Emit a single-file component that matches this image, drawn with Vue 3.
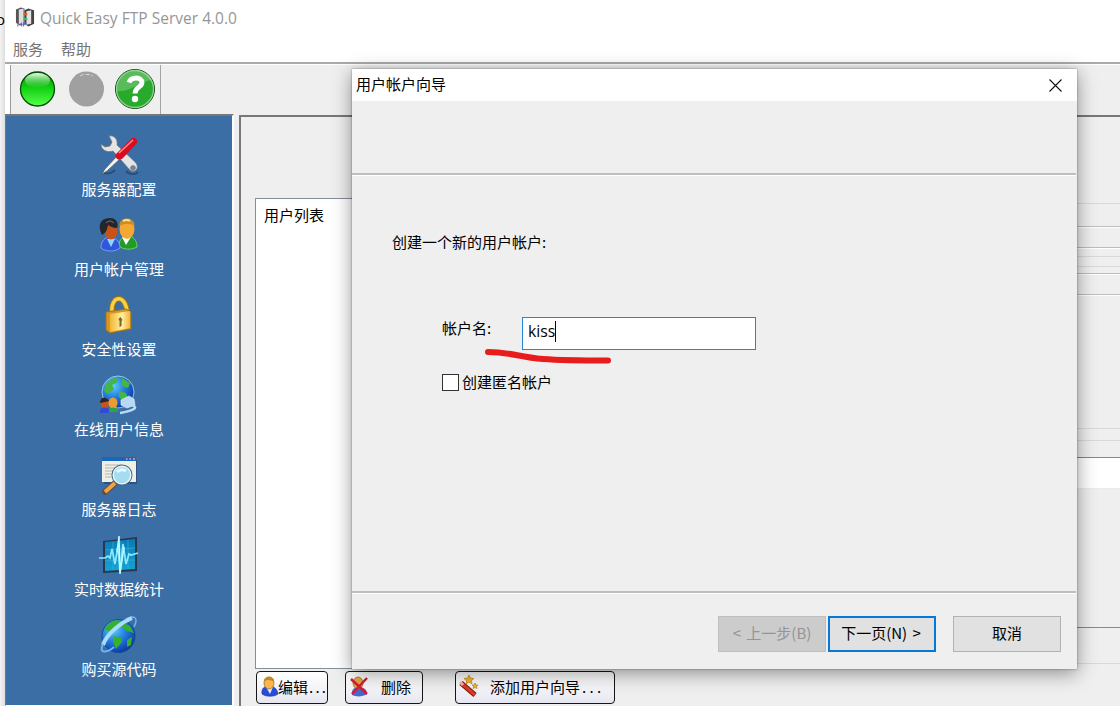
<template>
  <div class="desktop">
    <div class="behind">o</div>

    <!-- 主窗口 -->
    <div class="app-window">
      <header class="title-bar">
        <svg class="app-icon" viewBox="0 0 21 21">
          <path d="M1 2l5-2 4 1v17l-5 1-4-3z" fill="#555" />
          <path d="M4 2l5-1v17l-5-1z" fill="#ddd" />
          <path d="M10 3l4-2 6 2v14l-6 3-4-3z" fill="#444" />
          <path d="M12 4l5-1v14l-5 1z" fill="#e5e2e4" />
          <path d="M9 7h4" stroke="#ed5b24" stroke-width="2" />
          <path d="M9 12h4" stroke="#28c955" stroke-width="2" />
          <path d="M3 20v-4l2 2 2-2v4M9 20v-4h3M9 18h2" fill="none" stroke="#6761ce" />
        </svg>
        <span class="title-text">Quick Easy FTP Server 4.0.0</span>
      </header>
      <nav class="menu-bar">
        <span v-for="m in menus" :key="m">{{ m }}</span>
      </nav>

      <div class="tool-bar">
        <div class="tools">
          <svg class="tool" viewBox="0 0 42 42">
            <defs>
              <linearGradient id="led" x1="0" y1="0" x2="0" y2="1">
                <stop offset="0" stop-color="#078b07" />
                <stop offset=".45" stop-color="#10ce10" />
                <stop offset="1" stop-color="#55ff48" />
              </linearGradient>
              <linearGradient id="shine" x1="0" y1="0" x2="0" y2="1">
                <stop offset="0" stop-color="#e8ffe8" />
                <stop offset="1" stop-color="#2fc72f" stop-opacity=".3" />
              </linearGradient>
            </defs>
            <circle cx="21.500" cy="21" r="17" fill="url(#led)" stroke="#064b08" stroke-width="1.300" />
            <ellipse cx="21.500" cy="12.500" rx="12.500" ry="7.500" fill="url(#shine)" />
          </svg>
          <svg class="tool" viewBox="0 0 42 42">
            <circle cx="21.500" cy="21" r="17.500" fill="#a0a0a0" />
            <path d="M15 8l3-1.500h7l3 1.500" fill="none" stroke="#d4d4d4" stroke-dasharray="4 2" />
          </svg>
          <svg class="tool" viewBox="0 0 42 42">
            <circle cx="21" cy="21" r="19.500" fill="#29aa2c" stroke="#18441b" />
            <circle cx="21" cy="21" r="18.500" fill="none" stroke="#8bd48c" stroke-width="1.300" />
            <path d="M3 23C3 9 13 3 22 3c8 0 14 4 16 9C26 13 18 24 3 23z" fill="#fff" opacity=".22" />
            <path d="M15 14.500c2-6 13-6 13 0 0 5-7 4.500-7 11" fill="none" stroke="#fff" stroke-width="4.800" />
            <circle cx="21" cy="31" r="3.200" fill="#fff" />
          </svg>
        </div>
      </div>

      <div class="body">
        <aside class="side-bar">
          <div v-for="item in navItems" :key="item.icon" class="nav-item">
            <svg class="nav-icon" viewBox="0 0 40 40">
              <g v-if="item.icon === 'config'">
                <path d="M5 38c4 1 8 0 11-3M27 36c4 4 9 4 12 1" stroke="#2b4d7a" stroke-width="2" fill="none" />
                <path d="M10 1c5-1 9 3 8 9l18 17c6 6-1 13-6 7L14 16c-6 2-12-1-12-7l4 3 5-1 2-4z" fill="#e5e5e5" stroke="#777" stroke-width=".8" />
                <circle cx="34" cy="33" r="2.400" fill="#6386ad" stroke="#888" />
                <path d="M19 20L6 34l-3 5 5-3 14-13z" fill="#f4f4f4" stroke="#555" stroke-width=".7" />
                <path d="M17 19L32 4c3-3 7 0 6 4L24 23c-4 4-9 0-7-4z" fill="#d90d20" />
                <path d="M20 18L34 5" stroke="#ff8d8d" stroke-width="1.500" />
              </g>
              <g v-else-if="item.icon === 'users'">
                <path d="M20 31c0-7 4-10 9-10s9 4 9 11c-5 3-14 3-18-1z" fill="#239b28" stroke="#6bd15c" />
                <path d="M23 22l4 8 5-8z" fill="#fff" />
                <ellipse cx="28" cy="14" rx="7.500" ry="10" fill="#f5a832" />
                <path d="M20.500 11c-1-10 16-10 15 0-4-3-10-3-15 0z" fill="#c88d28" />
                <path d="M24 6q4-2 7 0" stroke="#ffe186" stroke-width="2" fill="none" />
                <path d="M2 33c0-7 4-11 9-11s10 4 10 11c-5 4-14 4-19 0z" fill="#3156de" stroke="#94b5ff" stroke-width=".7" />
                <path d="M8 24l4 8 4-8z" fill="#8fd6ff" />
                <ellipse cx="12" cy="16" rx="6.500" ry="8.500" fill="#c65318" />
                <path d="M3 20C-3 8 4 3 11 3c6 0 9 5 7 10-4 0-7-2-9-3-1 5-2 8-6 10z" fill="#24262c" />
                <path d="M7 8q4-4 8 0" stroke="#6c7480" fill="none" />
              </g>
              <g v-else-if="item.icon === 'lock'">
                <path d="M13 19c-2-20 14-20 15-2" fill="none" stroke="#a97410" stroke-width="5.500" />
                <path d="M13 19c-2-20 14-20 15-2" fill="none" stroke="#f6d345" stroke-width="3.500" />
                <path d="M7 17l20-3 5 3v17l-21 4-4-3z" fill="#d99622" stroke="#9c721e" />
                <path d="M11 19l20-3v17l-20 4z" fill="url(#gold)" />
                <path d="M21.500 22l2 3-1 1v5l-2 1v-6l-1-2z" fill="#776332" />
              </g>
              <g v-else-if="item.icon === 'online'">
                <circle cx="19" cy="17" r="16" fill="url(#globe)" stroke="#b4d8ed" stroke-width=".8" />
                <path d="M7 9l8-6 5 1-3 4-4 2 2 4-6 5-4-3zM23 3l8 5-2 5-6-2zM20 16l7 2 2 6-5 3-4-5z" fill="#46b643" />
                <ellipse cx="6" cy="28" rx="4.500" ry="5" fill="#c9531f" />
                <path d="M1 28q0-6 6-5l4 3z" fill="#29252c" />
                <path d="M1 38v-4q5-3 9 0v4z" fill="#334ad2" />
                <ellipse cx="14" cy="28" rx="4.500" ry="5.500" fill="#e99b34" />
                <path d="M10 37v-3q4-3 9 0v3z" fill="#2ca344" />
                <path d="M22 25l8-4 5 3 1 6-8 3-6-3z" fill="#b7d9f7" stroke="#d3e8fa" stroke-width=".7" />
                <path d="M32 30c9 2 2 6-11 8" fill="none" stroke="#b9daf5" stroke-width="2.500" />
              </g>
              <g v-else-if="item.icon === 'log'">
                <path d="M5 5h33v24H5z" fill="#233d6b" opacity=".6" />
                <path d="M3 2h34v25H3z" fill="#efefe8" />
                <path d="M3 2h34v4H3z" fill="#1767be" />
                <path d="M27 4h1.500m2 0h1.500m2 0h2" stroke="#f2a58c" stroke-width="1.500" />
                <path d="M6 10h17M6 13h13M6 16h10M6 19h9M6 22h9" stroke="#b5b4ae" />
                <path d="M16 28L6 37" stroke="#5a5048" stroke-width="6" stroke-linecap="round" />
                <path d="M16 28L6 37" stroke="#f4a145" stroke-width="4" />
                <circle cx="23" cy="20" r="9.500" fill="#9cdaf1" fill-opacity=".9" stroke="#45657b" stroke-width="2" />
                <circle cx="23" cy="20" r="8.800" fill="none" stroke="#e8faff" stroke-width="1.500" />
                <path d="M18 17q4-4 9-1" stroke="#e8faff" stroke-width="3" fill="none" />
              </g>
              <g v-else-if="item.icon === 'stat'">
                <path d="M4 6l34-4v34L4 38z" fill="#25384e" />
                <path d="M6 7l30-3v30L6 36z" fill="url(#panel)" />
                <path d="M14 7v28M22 6v29M29 5v29M7 15l29-2M6 26l30-1" stroke="#39bade" stroke-width=".6" />
                <path d="M0 23h6l3-2 2 2 2-9 3 15 3-18 2 26 3-28 3 20 3-10 2 1 7-2" fill="none" stroke="#8beaff" stroke-width="1.700" />
                <path d="M18 17l2-16 1 38 4-27" fill="none" stroke="#b9faff" stroke-width="1.500" />
              </g>
              <g v-else>
                <circle cx="19.500" cy="21" r="16.500" fill="url(#globe)" stroke="#174a91" />
                <path d="M5 14l8-8 6-1 3 5-6 4-5 3zM22 7l9 4 4 7-7-2-5-4zM15 21l7 2 1 4-6 7-3-7zM28 25l5-3-1 8-4 2z" fill="#35b12d" />
                <path d="M27 4c8-4 13-2 8 8" fill="none" stroke="#6cb4ec" stroke-width="1.500" />
                <path d="M33 3C23 7 8 18 4 30" fill="none" stroke="#a9dcfa" stroke-width="4" />
                <path d="M4 29c-5 10 4 9 11 3" fill="none" stroke="#6cb4ec" stroke-width="2" />
              </g>
            </svg>
            <span class="nav-label">{{ item.label }}</span>
          </div>
        </aside>

        <main class="panel">
          <div class="panel-main">
            <div class="user-list">用户列表</div>
            <!-- 右侧详情区的各行分隔 -->
            <div class="details">
              <div
                v-for="(row, i) in detailRows"
                :key="i"
                class="detail-row"
                :class="row.type"
                :style="{ height: row.h + 'px' }"
              ></div>
            </div>
          </div>
          <div class="actions">
            <button class="action edit">
              <svg class="action-icon" viewBox="0 0 20 22">
                <path d="M2 19c-1-6 3-8 7-8s8 2 9 8c-4 3-12 3-16 0z" fill="#284ddc" stroke="#173086" stroke-width=".6" />
                <path d="M6 12l4 7 3-7z" fill="#d7efff" />
                <ellipse cx="9" cy="8" rx="5" ry="6" fill="#ffb54d" stroke="#946117" stroke-width=".7" />
                <path d="M4 7C3 0 15 0 14 7c-3-2-7-3-10 0z" fill="#bd8a25" />
              </svg>
              <span>编辑<i class="dots">...</i></span>
            </button>
            <button class="action remove">
              <svg class="action-icon" viewBox="0 0 20 22">
                <path d="M3 20c-1-6 3-8 7-8s8 2 8 7c-4 3-11 3-15 1z" fill="#4569cd" />
                <ellipse cx="9" cy="8" rx="5" ry="6" fill="#e8a63e" stroke="#946117" stroke-width=".7" />
                <path d="M2 4l16 15M18 3L3 19" stroke="#d41b3a" stroke-width="2.500" />
              </svg>
              <span>删除</span>
            </button>
            <button class="action wizard">
              <svg class="action-icon" viewBox="0 0 20 22">
                <path d="M2 8l14 12" stroke="#791b10" stroke-width="5" />
                <path d="M2 8l14 12" stroke="#df3927" stroke-width="3" />
                <path d="M1 7l3 3" stroke="#f7b8a6" stroke-width="3" />
                <path d="M10 0l1.500 3 3.500.5-2.500 2 .5 3.500-3-2-3 2 .500-3.500L5 3.500 8.500 3zM16 8l1 2h2l-1.500 1.500.5 2-2-1-2 1 .500-2L13 10h2z" fill="#f2b821" stroke="#b27512" stroke-width=".6" />
              </svg>
              <span>添加用户向导<i class="dots">...</i></span>
            </button>
          </div>
        </main>
      </div>
    </div>

    <!-- 用户帐户向导 -->
    <div class="dialog">
      <div class="dialog-title">
        <span>用户帐户向导</span>
        <svg class="close" viewBox="0 0 13 13">
          <path d="M.5.5l12 12M12.500.5l-12 12" stroke="#111" stroke-width="1.100" />
        </svg>
      </div>
      <div class="dialog-head"></div>
      <div class="dialog-body">
        <p class="lead">创建一个新的用户帐户:</p>
        <div class="field">
          <label>帐户名:</label>
          <div class="input"><span>{{ account }}</span><i class="caret"></i></div>
        </div>
        <div class="check">
          <i class="box"></i>
          <span>创建匿名帐户</span>
        </div>
        <svg class="mark" viewBox="0 0 132 18">
          <path d="M5 5C28 5 35 10 60 12q20 1.500 65 1.500" fill="none" stroke="#e81c1c" stroke-width="6" stroke-linecap="round" />
        </svg>
      </div>
      <div class="dialog-foot">
        <button class="btn disabled">&lt; 上一步(B)</button>
        <button class="btn primary">下一页(N) &gt;</button>
        <button class="btn cancel">取消</button>
      </div>
    </div>

    <svg class="defs" width="0" height="0">
      <defs>
        <radialGradient id="globe" cx=".35" cy=".3" r=".75">
          <stop offset="0" stop-color="#62cdf8" />
          <stop offset=".5" stop-color="#237ddd" />
          <stop offset="1" stop-color="#0c35a4" />
        </radialGradient>
        <linearGradient id="gold">
          <stop offset="0" stop-color="#f3b737" />
          <stop offset=".6" stop-color="#fff0a1" />
          <stop offset="1" stop-color="#efb63e" />
        </linearGradient>
        <linearGradient id="panel" x1="0" y1="0" x2="0" y2="1">
          <stop offset="0" stop-color="#0a79b7" />
          <stop offset="1" stop-color="#16a2d2" />
        </linearGradient>
      </defs>
    </svg>
  </div>
</template>

<script setup>
import { ref } from 'vue'

const account = ref('kiss')
const menus = ['服务', '帮助']

const navItems = [
  { icon: 'config', label: '服务器配置' },
  { icon: 'users', label: '用户帐户管理' },
  { icon: 'lock', label: '安全性设置' },
  { icon: 'online', label: '在线用户信息' },
  { icon: 'log', label: '服务器日志' },
  { icon: 'stat', label: '实时数据统计' },
  { icon: 'buy', label: '购买源代码' },
]

const detailRows = [
  { h: 87, type: 'soft' },
  { h: 23, type: 'line' },
  { h: 21, type: 'line' },
  { h: 9, type: 'soft' },
  { h: 10, type: 'soft' },
  { h: 7, type: 'line' },
  { h: 21, type: 'line' },
  { h: 134, type: 'soft' },
  { h: 12, type: 'soft' },
  { h: 17, type: 'dark' },
  { h: 31, type: 'white' },
  { h: 139, type: 'dark' },
  { h: 36, type: 'soft' },
]
</script>

<style>
body { background: #efefef; overflow: hidden; }
</style>

<style scoped>
.desktop {
  position: relative;
  display: flex;
  width: 1120px; height: 706px;
  overflow: hidden;
  background: #efefef;
  color: #000;
  font-family: "Noto Sans CJK SC", sans-serif;
  font-size: 15px;
}
.desktop * { box-sizing: border-box; }
.desktop svg { display: block; flex: none; }
.desktop i { font-style: normal; }
.defs { position: absolute; }

.behind {
  width: 5px; padding-top: 9px;
  overflow: hidden;
  background: linear-gradient(90deg, #f3f3f3, #dedede);
  font-family: "Open Sans", sans-serif;
  font-size: 15px; line-height: 20px;
  text-indent: -4px;
}

/* 主窗口 */
.app-window {
  flex: 1; min-width: 0;
  display: flex; flex-direction: column;
}
.title-bar {
  display: flex; align-items: center; gap: 5px;
  height: 37px; padding: 0 0 2px 10px;
  background: #fff;
  color: #969696;
}
.app-icon { width: 20px; height: 21px; }
.title-text { font-family: "Open Sans", sans-serif; font-size: 15.5px; letter-spacing: 0.02px; white-space: nowrap; }
.menu-bar {
  display: flex; gap: 18px;
  height: 27px; padding-left: 8px;
  background: #fff;
  border-bottom: 2px solid #aaa;
  color: #747474;
  line-height: 23px;
}
.tool-bar {
  height: 50px; padding-left: 5px;
  background: linear-gradient(90deg, #fff 5px, #efefef 5px);
  border-top: 1px solid #fff;
}
.tools {
  display: flex; align-items: center; gap: 7px;
  width: 151px; height: 49px; padding: 0 0 2px 5px;
  border-left: 1px solid #9b9b9b;
  border-right: 1px solid #a3a3a3;
}
.tool { width: 42px; height: 42px; }

.body { flex: 1; display: flex; min-height: 0; }
.side-bar {
  width: 229px; padding-top: 19px;
  background: #3b6ea5;
  border-top: 2px solid #777;
  border-left: 1px solid #777;
  border-right: 2px solid #fff;
  border-bottom: 1px solid #fff;
}
.nav-item {
  display: flex; flex-direction: column; align-items: center;
  height: 80px; padding-right: 1px;
}
.nav-icon { width: 40px; height: 40px; margin-bottom: 3px; }
.nav-label { color: #fff; line-height: 22px; padding-left: 1px; }

.panel {
  flex: 1; min-width: 0;
  display: flex; flex-direction: column;
  margin: 1px 0 0 5px;
  border-top: 2px solid #787878;
  border-left: 2px solid #787878;
}
.panel-main { display: flex; height: 552px; }
.user-list {
  width: 430px; margin: 81px 0 0 14px; padding: 5px 8px;
  background: #fff;
  border: 1px solid #868d9a;
  line-height: 22px;
}
.details { flex: 1; }
.detail-row { border-bottom: 1px solid #d9d9d9; }
.detail-row.line { border-bottom-color: #bdbdbd; box-shadow: 0 1px #fff; }
.detail-row.dark { border-bottom-color: #838991; }
.detail-row.white { background: #fff; border-bottom-color: #ececec; }

.actions { display: flex; padding: 2px 0 0 15px; }
.action {
  display: flex; align-items: center;
  height: 33px; padding: 0 0 3px 3px;
  background: linear-gradient(#fff 0%, #f5f5f9 50%, #e6e6f1 100%);
  border: 1px solid #161616;
  border-radius: 4px;
  color: #000;
  font-family: inherit; font-size: 15px;
  white-space: nowrap;
}
.action-icon { width: 20px; height: 22px; }
.edit { width: 72px; }
.edit span { margin-left: -2px; }
.remove { width: 78px; margin-left: 17px; }
.remove span { margin-left: 12px; }
.wizard { width: 160px; margin-left: 32px; }
.wizard span { margin-left: 11px; }
.dots { letter-spacing: 3.3px; margin-left: 2px; }
.edit .dots { letter-spacing: 2.2px; margin-left: 1px; }

/* 向导对话框 */
.dialog {
  position: absolute; left: 352px; top: 69px;
  display: flex; flex-direction: column;
  width: 725px; height: 600px;
  background: #efefef;
  box-shadow: 0 0 2px rgba(0,0,0,0.4), 0 4px 18px rgba(0,0,0,0.42);
}
.dialog-title {
  display: flex; align-items: center; justify-content: space-between;
  height: 32px; padding: 0 15px 0 4px;
  background: #fff;
}
.dialog-title span { padding-bottom: 4px; }
.close { width: 13px; height: 13px; }
.dialog-head {
  height: 75px; margin-right: 1px;
  border-bottom: 1px solid #fff;
  box-shadow: inset 0 -2px #bebebe;
}
.dialog-body {
  position: relative;
  height: 418px; margin-right: 1px; padding: 54px 0 0 40px;
  border-bottom: 1px solid #fff;
  box-shadow: inset 0 -2px #bebebe;
}
.lead { margin: 0; line-height: 24px; }
.field { display: flex; margin: 63px 0 0 50px; }
.field label { width: 80px; line-height: 22px; }
.input {
  display: flex; align-items: flex-start;
  width: 234px; height: 33px; padding: 3px 5px;
  background: #fff;
  border: 1px solid #2187d9;
  font-family: "Open Sans", sans-serif;
  font-size: 15.8px; line-height: 20px;
}
.caret { width: 1px; height: 21px; background: #000; }
.check {
  display: flex; align-items: center; gap: 3px;
  height: 24px; margin: 20px 0 0 50px;
}
.check span { padding-bottom: 1px; }
.box { width: 17px; height: 17px; background: #fff; border: 1px solid #333; }
/* 手绘标记线 */
.mark { position: absolute; left: 131px; top: 171px; width: 132px; height: 18px; }

.dialog-foot { display: flex; padding: 22px 0 0 366px; }
.btn {
  width: 108px; height: 36px; padding: 0 0 2px;
  background: #e1e1e1;
  border: 1px solid #b2b2b2;
  color: #000;
  font-family: inherit; font-size: 15px; line-height: 30px;
  word-spacing: 2px;
}
.btn.disabled { background: #ccc; border-color: #bfbfbf; color: #949494; }
.btn.primary { margin-left: 2px; padding-right: 2px; border: 2px solid #0878d7; }
.btn.cancel { margin-left: 17px; }
</style>
